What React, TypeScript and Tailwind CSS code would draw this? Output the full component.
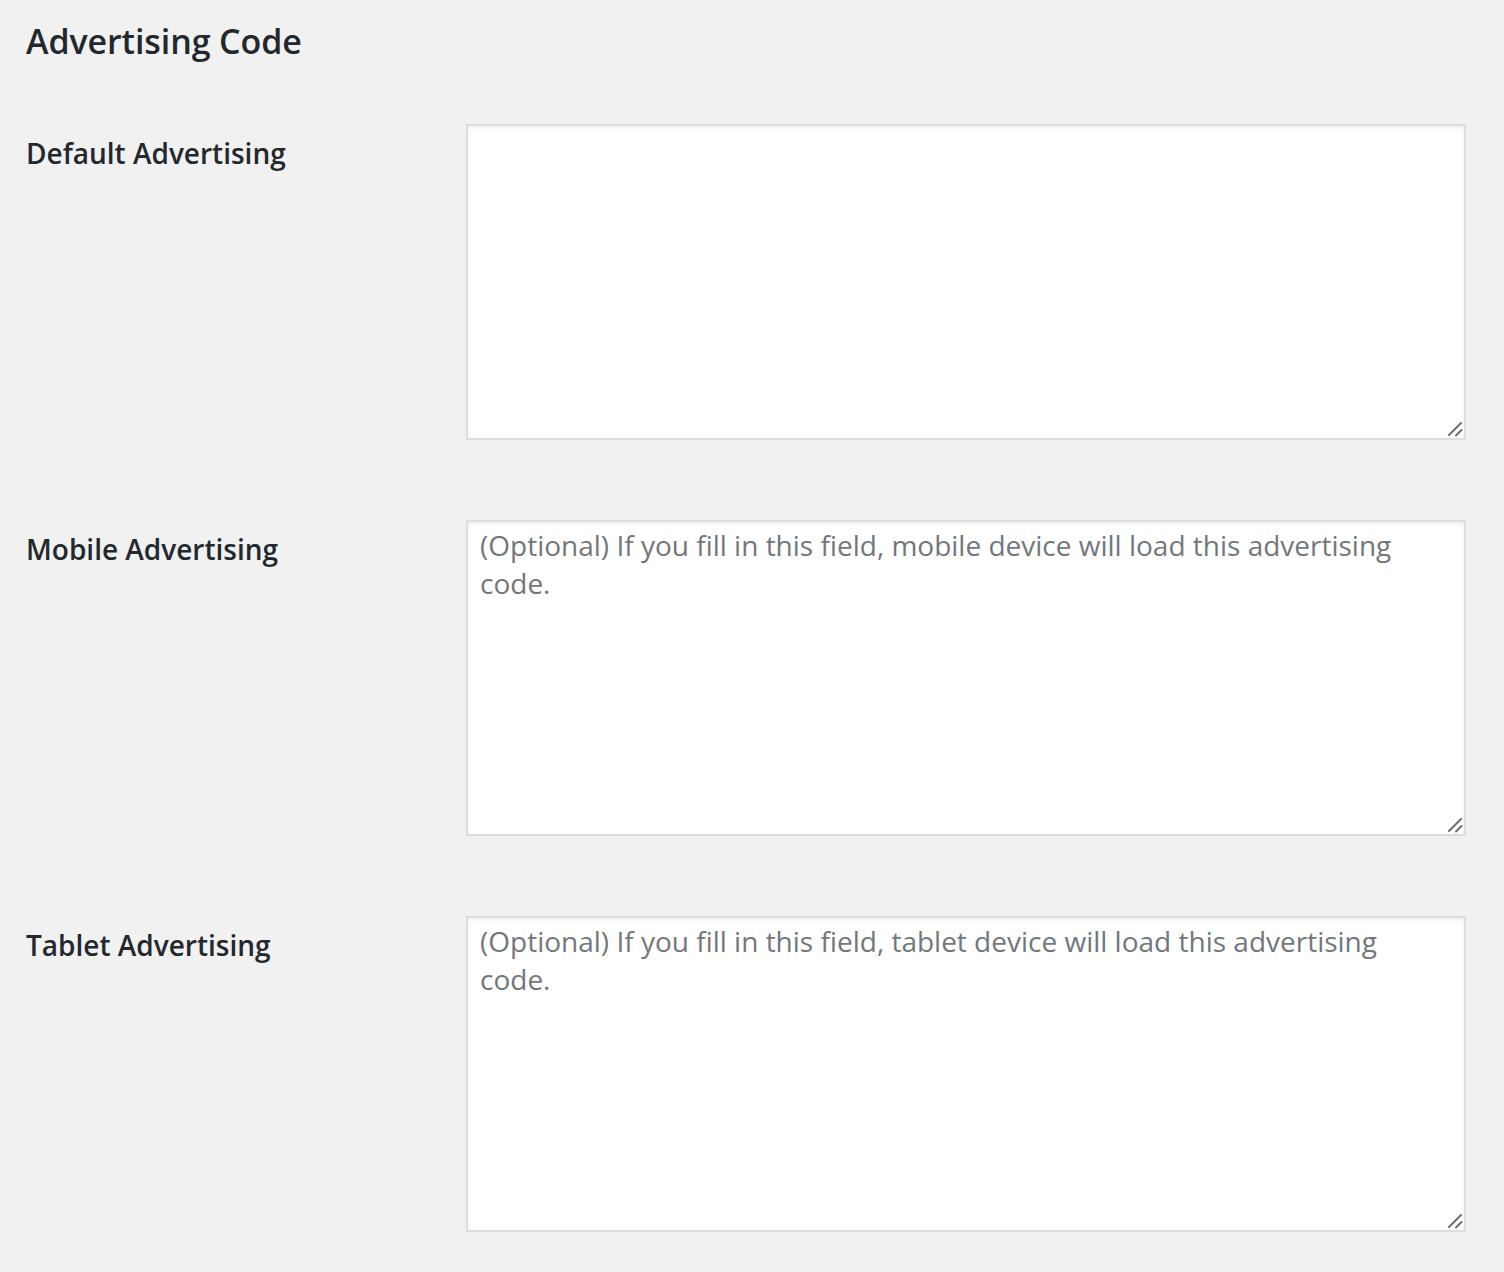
import React from "react";

const rows = [
  { label: "Default Advertising", placeholder: "" },
  {
    label: "Mobile Advertising",
    placeholder:
      "(Optional) If you fill in this field, mobile device will load this advertising code.",
  },
  {
    label: "Tablet Advertising",
    placeholder:
      "(Optional) If you fill in this field, tablet device will load this advertising code.",
  },
];

function Grip() {
  return (
    <svg
      className="absolute right-[3px] bottom-[3px] pointer-events-none"
      width="16"
      height="16"
      viewBox="0 0 16 16"
    >
      <line x1="2" y1="14" x2="14" y2="2" stroke="#6b6b6b" strokeWidth="2" strokeLinecap="round" />
      <line x1="9" y1="14.5" x2="14.5" y2="9" stroke="#6b6b6b" strokeWidth="2" strokeLinecap="round" />
    </svg>
  );
}

export default function App() {
  return (
    <div
      className="min-h-[1272px] bg-[#f1f1f1] text-[#23282d] pl-[26px] pr-[38px] pb-[40px]"
      style={{ fontFamily: '"Open Sans", "Noto Sans", sans-serif' }}
    >
      <h2 className="pt-[19px] text-[34px] leading-[44px] font-semibold tracking-[-0.1px] m-0">Advertising Code</h2>
      <div className="mt-[61px] flex flex-col gap-[80px]">
        {rows.map((r) => (
          <div key={r.label} className="flex">
            <div className="w-[440px] shrink-0 pt-[11px] text-[28px] leading-[36px] font-semibold">
              {r.label}
            </div>
            <div className="relative flex-1">
              <textarea
                className="block w-full h-[316px] resize-none bg-white border-2 border-[#dddddd] shadow-[inset_0_2px_4px_rgba(0,0,0,0.07)] px-[12px] py-[4px] text-[28px] leading-[38px] text-[#32373c] placeholder:text-[#72777c] outline-none"
                style={{ fontFamily: '"Open Sans", "Noto Sans", sans-serif' }}
                placeholder={r.placeholder}
              />
              <Grip />
            </div>
          </div>
        ))}
      </div>
    </div>
  );
}
